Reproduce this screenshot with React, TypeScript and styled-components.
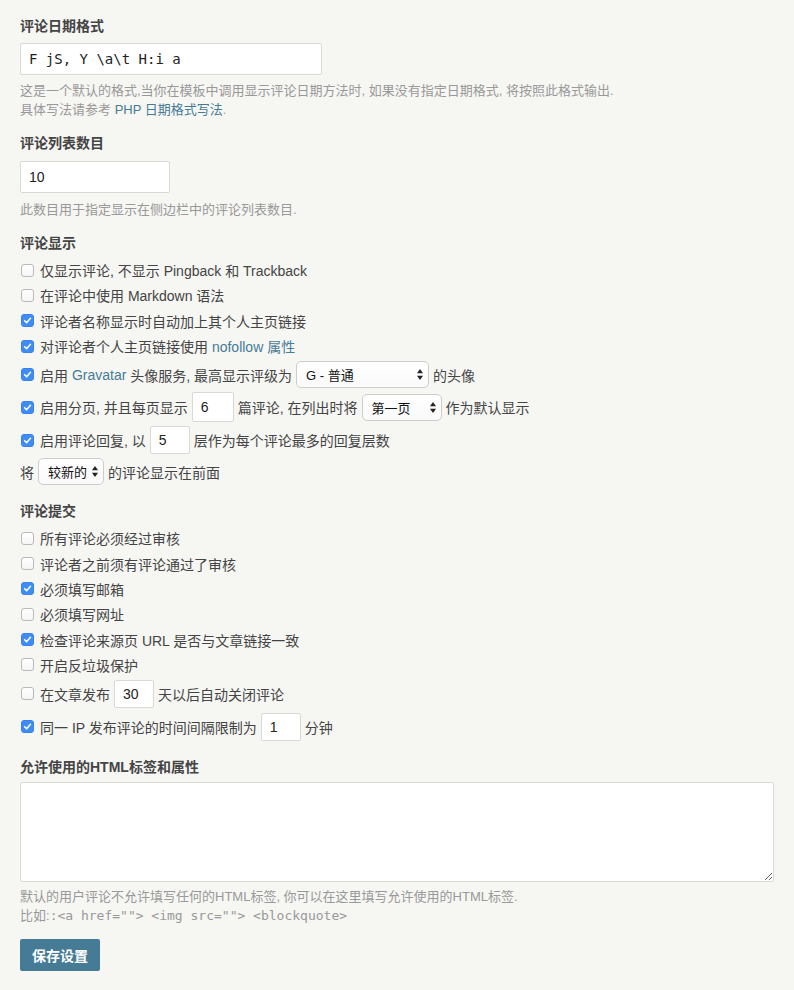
import React from "react";
import styled, { createGlobalStyle } from "styled-components";

const GlobalStyle = createGlobalStyle`
  html, body {
    margin: 0;
    padding: 0;
    background: #f6f6f3;
  }
  body {
    font-family: "Liberation Sans", "Noto Sans CJK SC", sans-serif;
    font-size: 14px;
    color: #444;
  }
`;

const Page = styled.form`
  padding: 16px 20px 16px;
  width: 754px;
`;

const Section = styled.section`
  margin-bottom: 14px;
`;

const Label = styled.div<{ $gap?: number }>`
  font-size: 14px;
  font-weight: bold;
  line-height: 20px;
  color: #444;
  margin-bottom: ${(p) => (p.$gap ?? 7)}px;
`;

const TextInput = styled.input<{ $width: number; $mono?: boolean }>`
  display: block;
  box-sizing: border-box;
  width: ${(p) => p.$width}px;
  height: 32px;
  padding: 0 8px;
  border: 1px solid #d9d9d6;
  border-radius: 2px;
  background: #fff;
  font-family: ${(p) =>
    p.$mono ? `"DejaVu Sans Mono", monospace` : `"Liberation Sans", sans-serif`};
  font-size: 14px;
  color: #222;
  outline: none;
`;

const NumberInput = styled.input<{ $width?: number; $height?: number }>`
  box-sizing: border-box;
  width: ${(p) => p.$width ?? 40}px;
  height: ${(p) => p.$height ?? 28}px;
  margin: 0 4px;
  padding: 0 8px;
  border: 1px solid #d9d9d6;
  border-radius: 2px;
  background: #fff;
  font-family: "Liberation Sans", sans-serif;
  font-size: 14px;
  color: #222;
  outline: none;
`;

const TextArea = styled.textarea`
  display: block;
  box-sizing: border-box;
  width: 754px;
  height: 100px;
  border: 1px solid #d9d9d6;
  border-radius: 2px;
  background: #fff;
  outline: none;
  margin: 0;
`;

const Description = styled.p<{ $top?: number }>`
  margin: ${(p) => p.$top ?? 6}px 0 0;
  font-size: 13px;
  line-height: 19px;
  color: #999;
`;

const Link = styled.a`
  color: #467b96;
  text-decoration: none;
`;

const Code = styled.code`
  font-family: "DejaVu Sans Mono", monospace;
  font-size: 13px;
  color: #999;
`;

const OptionList = styled.ul`
  list-style: none;
  margin: 0;
  padding: 0;
`;

const Option = styled.li<{ $height?: number }>`
  display: flex;
  align-items: center;
  height: ${(p) => p.$height ?? 25.3}px;
  font-size: 14px;
  color: #444;
  white-space: nowrap;
`;

const Box = styled.span<{ $checked?: boolean }>`
  display: inline-flex;
  align-items: center;
  justify-content: center;
  flex-shrink: 0;
  box-sizing: border-box;
  width: 13px;
  height: 13px;
  margin: 0 6px 0 1px;
  border-radius: 3px;
  border: 1px solid ${(p) => (p.$checked ? "#3a83ee" : "#b9b9b9")};
  background: ${(p) =>
    p.$checked ? "#3f8cf5" : "linear-gradient(#fff, #f5f5f5)"};
`;

const SelectBox = styled.span<{ $width: number }>`
  display: inline-flex;
  align-items: center;
  justify-content: space-between;
  flex-shrink: 0;
  box-sizing: border-box;
  width: ${(p) => p.$width}px;
  height: 27px;
  margin: 0 4px;
  padding: 0 5px 0 9px;
  border: 1px solid #cdcdcd;
  border-radius: 5px;
  background: linear-gradient(#fff, #fafafa);
  font-size: 13px;
  color: #111;

  & svg {
    flex-shrink: 0;
  }
`;

const SubmitButton = styled.button`
  display: block;
  height: 32px;
  margin-top: 14px;
  padding: 0 12px;
  border: none;
  border-radius: 2px;
  background: #467b96;
  color: #fff;
  font-family: "Liberation Sans", "Noto Sans CJK SC", sans-serif;
  font-size: 14px;
  font-weight: bold;
`;

const Checkbox = ({ checked }: { checked?: boolean }) => (
  <Box $checked={checked}>
    {checked && (
      <svg width="9" height="9" viewBox="0 0 10 10">
        <path
          d="M1.8 5.2 L4 7.4 L8.3 2.6"
          fill="none"
          stroke="#fff"
          strokeWidth="1.7"
          strokeLinecap="round"
          strokeLinejoin="round"
        />
      </svg>
    )}
  </Box>
);

const Select = ({ value, width }: { value: string; width: number }) => (
  <SelectBox $width={width}>
    <span>{value}</span>
    <svg width="6" height="11" viewBox="0 0 6 11">
      <polygon points="0,4.2 3,0 6,4.2" fill="#222" />
      <polygon points="0,6.8 3,11 6,6.8" fill="#222" />
    </svg>
  </SelectBox>
);

export default function App() {
  return (
    <>
      <GlobalStyle />
      <Page>
        <Section>
          <Label>评论日期格式</Label>
          <TextInput $width={302} $mono defaultValue="F jS, Y \a\t H:i a" />
          <Description>
            这是一个默认的格式,当你在模板中调用显示评论日期方法时, 如果没有指定日期格式, 将按照此格式输出.
            <br />
            具体写法请参考 <Link href="#">PHP 日期格式写法</Link>.
          </Description>
        </Section>

        <Section>
          <Label $gap={8}>评论列表数目</Label>
          <TextInput $width={150} defaultValue="10" />
          <Description $top={6.5}>此数目用于指定显示在侧边栏中的评论列表数目.</Description>
        </Section>

        <Section>
          <Label $gap={5}>评论显示</Label>
          <OptionList>
            <Option>
              <Checkbox />
              仅显示评论, 不显示 Pingback 和 Trackback
            </Option>
            <Option>
              <Checkbox />
              在评论中使用 Markdown 语法
            </Option>
            <Option>
              <Checkbox checked />
              评论者名称显示时自动加上其个人主页链接
            </Option>
            <Option>
              <Checkbox checked />
              对评论者个人主页链接使用&nbsp;<Link href="#">nofollow 属性</Link>
            </Option>
            <Option $height={32}>
              <Checkbox checked />
              启用&nbsp;<Link href="#">Gravatar</Link>&nbsp;头像服务, 最高显示评级为
              <Select value="G - 普通" width={133} />
              的头像
            </Option>
            <Option $height={33}>
              <Checkbox checked />
              启用分页, 并且每页显示
              <NumberInput $width={42} $height={30} defaultValue="6" />
              篇评论, 在列出时将
              <Select value="第一页" width={80} />
              作为默认显示
            </Option>
            <Option $height={33}>
              <Checkbox checked />
              启用评论回复, 以
              <NumberInput defaultValue="5" />
              层作为每个评论最多的回复层数
            </Option>
            <Option $height={30}>
              将
              <Select value="较新的" width={66} />
              的评论显示在前面
            </Option>
          </OptionList>
        </Section>

        <Section>
          <Label $gap={5}>评论提交</Label>
          <OptionList>
            <Option>
              <Checkbox />
              所有评论必须经过审核
            </Option>
            <Option>
              <Checkbox />
              评论者之前须有评论通过了审核
            </Option>
            <Option>
              <Checkbox checked />
              必须填写邮箱
            </Option>
            <Option>
              <Checkbox />
              必须填写网址
            </Option>
            <Option>
              <Checkbox checked />
              检查评论来源页 URL 是否与文章链接一致
            </Option>
            <Option>
              <Checkbox />
              开启反垃圾保护
            </Option>
            <Option $height={33}>
              <Checkbox />
              在文章发布
              <NumberInput defaultValue="30" />
              天以后自动关闭评论
            </Option>
            <Option $height={33}>
              <Checkbox checked />
              同一 IP 发布评论的时间间隔限制为
              <NumberInput defaultValue="1" />
              分钟
            </Option>
          </OptionList>
        </Section>

        <Section>
          <Label $gap={5}>允许使用的HTML标签和属性</Label>
          <TextArea />
          <Description $top={5}>
            默认的用户评论不允许填写任何的HTML标签, 你可以在这里填写允许使用的HTML标签.
            <br />
            比如:<Code>{`:<a href=""> <img src=""> <blockquote>`}</Code>
          </Description>
          <SubmitButton type="button">保存设置</SubmitButton>
        </Section>
      </Page>
    </>
  );
}
